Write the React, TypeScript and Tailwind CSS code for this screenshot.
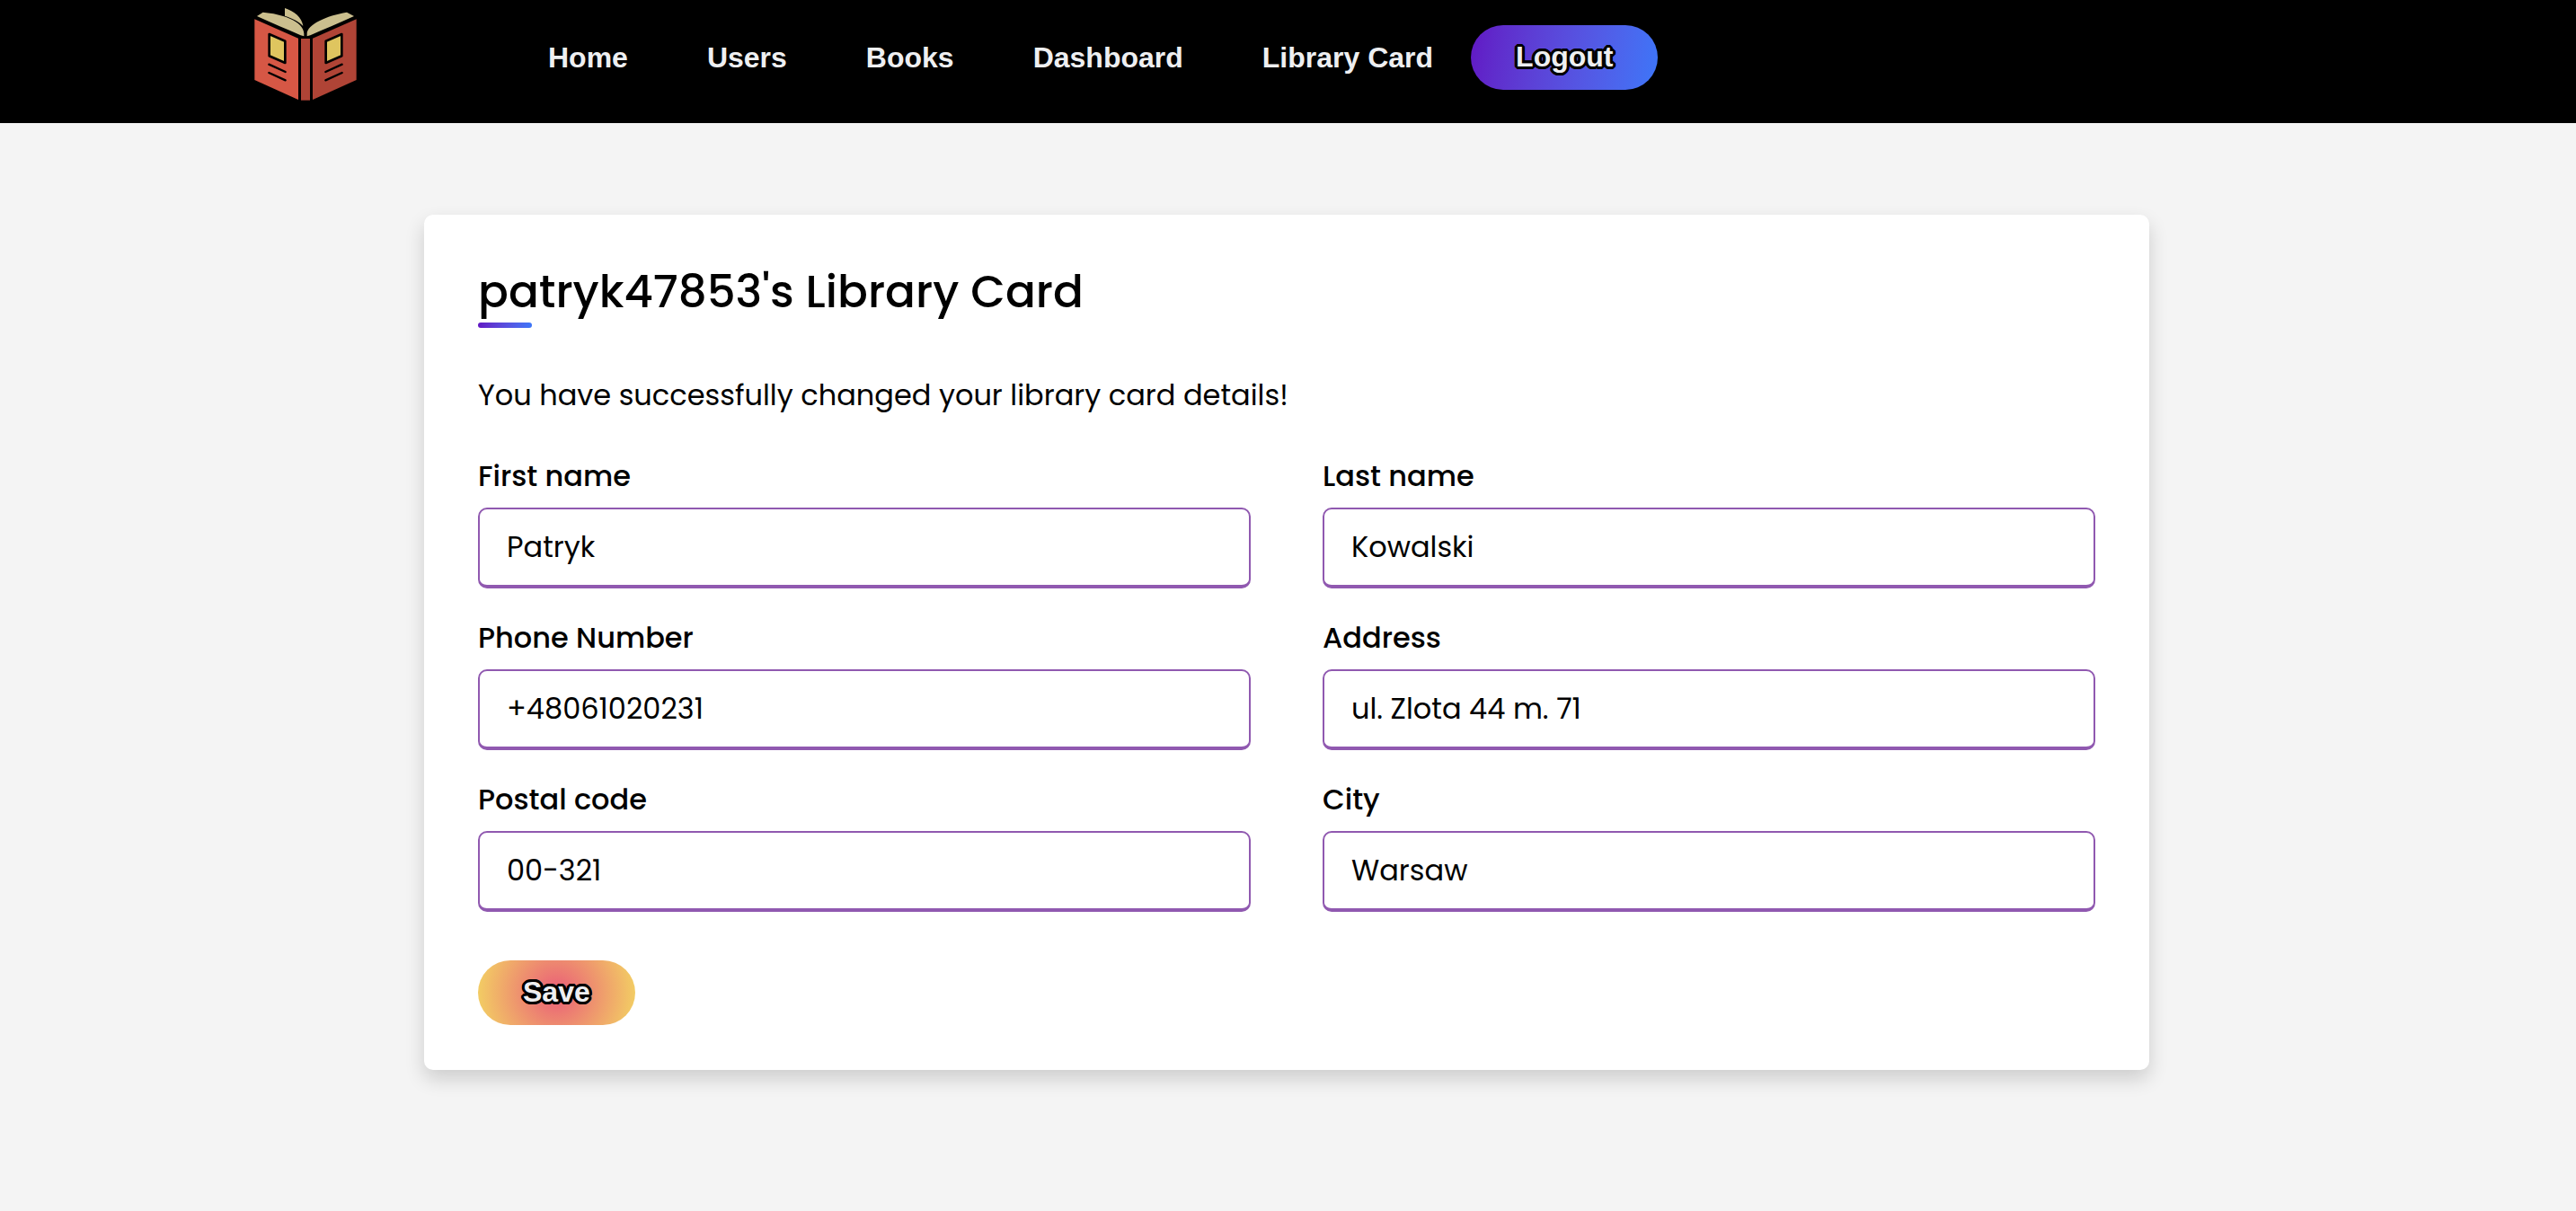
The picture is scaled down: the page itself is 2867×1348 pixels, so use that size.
import React from "react";

const links = ["Home", "Users", "Books", "Dashboard", "Library Card"];

const fields = [
  { id: "first-name", label: "First name", value: "Patryk" },
  { id: "last-name", label: "Last name", value: "Kowalski" },
  { id: "phone", label: "Phone Number", value: "+48061020231" },
  { id: "address", label: "Address", value: "ul. Zlota 44 m. 71" },
  { id: "postal-code", label: "Postal code", value: "00-321" },
  { id: "city", label: "City", value: "Warsaw" },
];

function BookLogo() {
  return (
    <svg viewBox="60 21 360 342" className="h-[114px] w-[120px] shrink-0" aria-hidden="true">
      <path d="M70 64 216 128V333L70 267Z" fill="#d65745" />
      <path d="M410 64 264 128V333L410 267Z" fill="#b04436" />
      <path d="M225 129H255V335H225Z" fill="#b04436" />
      <path d="M78 54 98 41C160 46 234 70 235 112V121L224 118C180 98 130 78 78 54Z" fill="#cbbf8e" />
      <path d="M402 54 378 41C310 52 246 82 245 112V121L256 118C300 98 350 78 402 54Z" fill="#cbbf8e" />
      <path d="M171 27C202 37 228 58 232 87C218 72 196 61 171 53Z" fill="#cbbf8e" />
      <path d="M119 114 172 137V210L119 187Z" fill="#dfc55f" stroke="#000" strokeWidth="8" strokeLinejoin="round" />
      <path d="M361 114 308 137V210L361 187Z" fill="#dfc55f" stroke="#000" strokeWidth="8" strokeLinejoin="round" />
      <path
        d="M118 215 173 240M118 243 173 268M362 215 307 240M362 243 307 268"
        stroke="#000"
        strokeWidth="7"
        strokeLinecap="round"
        fill="none"
      />
    </svg>
  );
}

const pill =
  "h-18 cursor-pointer rounded-full px-[50px] pb-[2px] font-['Liberation_Sans',sans-serif] text-[32px] leading-none font-bold text-[#eeeff1] [text-shadow:3px_0_0_#000,-3px_0_0_#000,0_3px_0_#000,0_-3px_0_#000,2px_2px_0_#000,-2px_2px_0_#000,2px_-2px_0_#000,-2px_-2px_0_#000,3px_1px_0_#000,-3px_1px_0_#000,3px_-1px_0_#000,-3px_-1px_0_#000,1px_3px_0_#000,-1px_3px_0_#000,1px_-3px_0_#000,-1px_-3px_0_#000]";

export default function App() {
  return (
    <div className="min-h-screen bg-[#f4f4f4] font-[Poppins,Inter,sans-serif] text-[32px] leading-12 text-black">
      <header className="flex items-center bg-black px-70 pt-[7px] pb-4">
        <a href="#" aria-label="Library home">
          <BookLogo />
        </a>
        <nav className="ml-[210px] flex items-center font-['Liberation_Sans',sans-serif] leading-none font-bold text-[#eeeff1]">
          <ul className="flex items-center gap-22">
            {links.map((link) => (
              <li key={link}>
                <a href="#">{link}</a>
              </li>
            ))}
          </ul>
          <button type="button" className={`ml-[42px] bg-linear-100 from-[#6116c4] to-[#3c76f8] ${pill}`}>
            Logout
          </button>
        </nav>
      </header>

      <main className="pt-[102px] pr-[3px]">
        <section className="mx-auto max-w-[1920px] rounded-[10px] bg-white px-15 pt-12 pb-[50px] shadow-[0_10px_21px_rgba(0,0,0,0.16)]">
          <h1 className="relative pb-[2px] text-[50px] leading-[76px] font-medium after:absolute after:bottom-0 after:left-0 after:h-[6px] after:w-15 after:rounded-full after:bg-linear-to-r after:from-[#6116c4] after:to-[#3c76f8]">
            patryk47853's Library Card
          </h1>
          <form onSubmit={(e) => e.preventDefault()}>
            <p className="mt-[51px]">You have successfully changed your library card details!</p>
            <div className="mt-[42px] grid grid-cols-2 gap-x-20 gap-y-[31px]">
              {fields.map((f) => (
                <div key={f.id} className="flex flex-col gap-[11px]">
                  <label htmlFor={f.id} className="font-medium">
                    {f.label}
                  </label>
                  <input
                    id={f.id}
                    name={f.id}
                    defaultValue={f.value}
                    className="h-[90px] w-full rounded-[10px] border-2 border-b-4 border-[#9059b0] bg-white px-[30px] outline-none"
                  />
                </div>
              ))}
            </div>
            <button
              type="submit"
              className={`mt-[54px] block bg-[radial-gradient(circle_farthest-corner,#ea5c78_0%,#f3d562_100%)] ${pill}`}
            >
              Save
            </button>
          </form>
        </section>
      </main>
    </div>
  );
}
